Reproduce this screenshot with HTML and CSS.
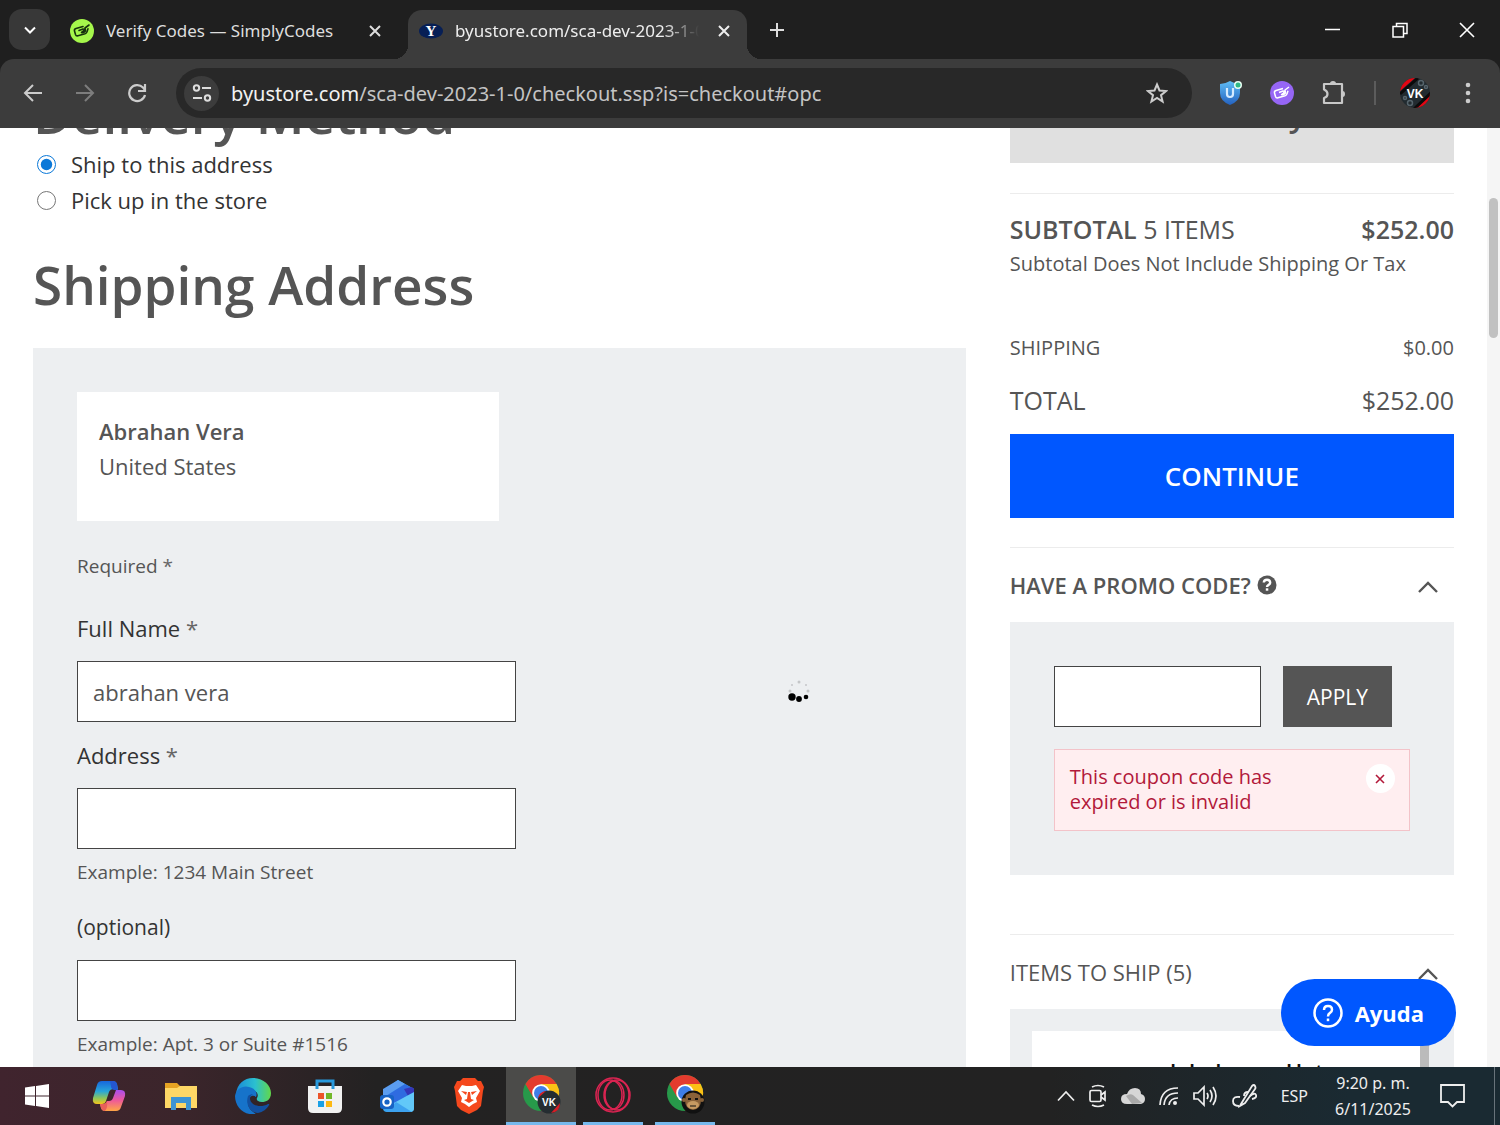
FILE: index.html
```html
<!DOCTYPE html>
<html lang="en">
<head>
    <meta charset="UTF-8">
    <meta name="viewport" content="width=device-width, initial-scale=1.0">
    <title>Checkout</title>
    <link rel="stylesheet" href="styles.css">
</head>
<body>
    <!-- Tab strip -->
    <header class="tab-strip">
        <button class="tab-search" aria-label="Search tabs">
            <svg width="14" height="14" viewBox="0 0 14 14" fill="none" stroke="#fff" stroke-width="2"><path d="M2 4.500l5 5 5-5"/></svg>
        </button>
        <div class="tab">
            <svg class="favicon" viewBox="0 0 24 24"><circle cx="12" cy="12" r="12" fill="#a5f74b"/><g fill="none" stroke="#17320d" stroke-width="1.600" stroke-linejoin="round" stroke-linecap="round"><path d="M13 7.500L6 9.500q-2 .7-1.500 2.500l1 3.500q.6 1.800 2.500 1.300l7-2q1.500-.5 2-2l1-3"/><path d="M9 11.500l4-1.500q2 0 .5 2l-2 1.500q2 1 4-1.500l-.5-3L19 6"/></g></svg>
            <span class="tab-title">Verify Codes — SimplyCodes</span>
            <button class="tab-close" aria-label="Close tab"><svg width="12" height="12" viewBox="0 0 12 12" stroke="#ddd" stroke-width="2"><path d="M1 1l10 10M11 1L1 11"/></svg></button>
        </div>
        <div class="tab tab-active">
            <svg class="favicon" viewBox="0 0 24 24"><ellipse cx="12" cy="12" rx="12" ry="7.500" fill="#071f55"/><text x="12" y="17" text-anchor="middle" class="favicon-letter">Y</text></svg>
            <span class="tab-title">byustore.com/sca-dev-2023-1-0</span>
            <button class="tab-close" aria-label="Close tab"><svg width="12" height="12" viewBox="0 0 12 12" stroke="#eee" stroke-width="2"><path d="M1 1l10 10M11 1L1 11"/></svg></button>
        </div>
        <button class="new-tab" aria-label="New tab"><svg width="16" height="16" viewBox="0 0 16 16" stroke="#ddd" stroke-width="2"><path d="M8 1v14M1 8h14"/></svg></button>
        <div class="window-controls">
            <button aria-label="Minimize"><svg width="16" height="16" viewBox="0 0 16 16" stroke="#fff" stroke-width="1.500"><path d="M0 7.500h15"/></svg></button>
            <button aria-label="Restore"><svg width="16" height="16" viewBox="0 0 16 16" fill="none" stroke="#fff" stroke-width="1.500"><path d="M1 4.500h10.500V15H1zM4.500 4.500V1.500H15v10h-3.500"/></svg></button>
            <button aria-label="Close"><svg width="16" height="16" viewBox="0 0 16 16" stroke="#fff" stroke-width="1.600"><path d="M1 1l14 14M15 1L1 15"/></svg></button>
        </div>
    </header>

    <!-- Toolbar -->
    <div class="toolbar-wrap">
    <nav class="toolbar">
        <button class="nav-btn" aria-label="Back"><svg width="20" height="20" viewBox="0 0 20 20" fill="none" stroke="#ccc" stroke-width="2"><path d="M19 10H2M10 2l-8 8 8 8"/></svg></button>
        <button class="nav-btn" aria-label="Forward"><svg width="20" height="20" viewBox="0 0 20 20" fill="none" stroke="#7d7d7d" stroke-width="2"><path d="M1 10h17M10 2l8 8-8 8"/></svg></button>
        <button class="nav-btn" aria-label="Reload"><svg width="20" height="20" viewBox="0 0 20 20" fill="none" stroke="#ccc" stroke-width="2.200"><path d="M18 12A8 8 0 1 1 16 4.500L18 7M18 1v7h-7"/></svg></button>
        <div class="url-bar">
            <button class="site-info" aria-label="Site information"><svg width="20" height="20" viewBox="0 0 20 20" fill="none" stroke="#ddd" stroke-width="2"><circle cx="4.500" cy="5" r="2.700"/><path d="M10 5h9M1 15h9"/><circle cx="15.500" cy="15" r="2.700"/></svg></button>
            <div class="url"><span class="url-host">byustore.com</span><span>/sca-dev-2023-1-0/checkout.ssp?is=checkout#opc</span></div>
            <button class="icon-btn" aria-label="Bookmark"><svg width="22" height="22" viewBox="0 0 22 22" fill="none" stroke="#ccc" stroke-width="2"><path d="M11 2.500l2.500 6 6.500.5-5 4.200 1.600 6.300L11 16l-5.600 3.500L7 13.200 2 9l6.500-.5z"/></svg></button>
        </div>
        <div class="extensions">
            <button class="icon-btn" aria-label="Shield"><svg width="24" height="26" viewBox="0 0 24 26"><defs><linearGradient id="shield" x2="0" y2="1"><stop stop-color="#5fbdf5"/><stop offset="1" stop-color="#2462c0"/></linearGradient></defs><path d="M2 4Q7 4 12 1q5 3 10 3v9q0 8-10 12Q2 21 2 13z" fill="url(#shield)"/><path d="M9 8v6q0 3 3 3t3-3V8" fill="none" stroke="#d5ebff" stroke-width="2.200"/><circle cx="20" cy="5" r="4" fill="#e9fff4"/><circle cx="20" cy="5" r="2.500" fill="#2fb886"/></svg></button>
            <button class="icon-btn" aria-label="SimplyCodes"><svg width="24" height="24" viewBox="0 0 24 24"><circle cx="12" cy="12" r="12" fill="#9666f5"/><g fill="none" stroke="#fff" stroke-width="1.500" stroke-linejoin="round"><path d="M13 7.500L6 9.500q-2 .7-1.500 2.500l1 3.500q.6 1.800 2.500 1.300l7-2q1.500-.5 2-2l1-3"/><path d="M9 11.500l4-1.500q2 0 .5 2l-2 1.500q2 1 4-1.500l-.5-3L19 6"/></g></svg></button>
            <button class="icon-btn" aria-label="Extensions"><svg width="24" height="26" viewBox="0 0 24 26" fill="none" stroke="#c8c8c8" stroke-width="2.200" stroke-linejoin="round"><path d="M3 4h17v19H2v-5q3.500-1 3.500-4T2 9.500V4z"/><path d="M8 3.500q0-2.500 3-2.500t3 2.500zM20.500 11q2.500 0 2.500 3t-2.500 3z" fill="#c8c8c8" stroke="none"/></svg></button>
            <span class="toolbar-sep"></span>
            <button class="icon-btn" aria-label="Profile"><svg width="30" height="30" viewBox="0 0 30 30"><defs><clipPath id="round"><circle cx="15" cy="15" r="15"/></clipPath></defs><g clip-path="url(#round)"><path fill="#222b30" d="M0 0h30v30H0z"/><path d="M0 13L15 0H0zM15 30l15-15v15z" fill="#e30613"/><path d="M0 16L18 0M14 31l19-18" stroke="#0b0b0b" stroke-width="3"/><g fill="none" stroke="#56646c" stroke-width="1.500"><circle cx="21" cy="5" r="2.500"/><circle cx="10" cy="25" r="2.500"/><circle cx="26" cy="9" r="1.500"/><circle cx="5" cy="20" r="1.500"/></g><text x="15" y="20" text-anchor="middle" class="avatar-text">VK</text></g></svg></button>
            <button class="icon-btn menu-btn" aria-label="Menu"><svg width="6" height="22" viewBox="0 0 6 22" fill="#ccc"><circle cx="3" cy="3" r="2.300"/><circle cx="3" cy="11" r="2.300"/><circle cx="3" cy="19" r="2.300"/></svg></button>
        </div>
    </nav>
    </div>

    <!-- Checkout page, scrolled a little -->
    <div class="viewport">
        <main class="checkout">
            <section class="checkout-form">
                <h2>Delivery Method</h2>
                <label class="radio-row"><input type="radio" name="delivery" checked> Ship to this address</label>
                <label class="radio-row"><input type="radio" name="delivery"> Pick up in the store</label>

                <h2 class="shipping-title">Shipping Address</h2>
                <form class="address-panel">
                    <div class="address-card">
                        <strong>Abrahan Vera</strong>
                        <span>United States</span>
                    </div>
                    <p class="required-note">Required <span class="star">*</span></p>
                    <div class="field">
                        <label for="fullname">Full Name <span class="star">*</span></label>
                        <input type="text" id="fullname" value="abrahan vera">
                    </div>
                    <div class="field">
                        <label for="addr1">Address <span class="star">*</span></label>
                        <input type="text" id="addr1">
                        <p class="hint">Example: 1234 Main Street</p>
                    </div>
                    <div class="field">
                        <label for="addr2" class="optional">(optional)</label>
                        <input type="text" id="addr2">
                        <p class="hint">Example: Apt. 3 or Suite #1516</p>
                    </div>
                </form>
            </section>

            <aside class="summary">
                <div class="summary-head">Summary</div>
                <div class="totals">
                    <div class="row row-big"><span><b>SUBTOTAL</b> 5 ITEMS</span><b>$252.00</b></div>
                    <p class="totals-note">Subtotal Does Not Include Shipping Or Tax</p>
                    <div class="row row-small"><span>SHIPPING</span><span>$0.00</span></div>
                    <div class="row row-big row-total"><span>TOTAL</span><span>$252.00</span></div>
                    <button class="continue-btn">CONTINUE</button>
                </div>
                <div class="accordion">
                    <button class="accordion-head">
                        <b>HAVE A PROMO CODE?</b>
                        <svg width="20" height="20" viewBox="0 0 20 20"><circle cx="10" cy="10" r="9.500" fill="#555"/><path d="M6.800 7.500Q7 4.800 10 4.800t3.200 2.700q0 1.500-1.600 2.400T10 12" fill="none" stroke="#fff" stroke-width="2.400"/><path fill="#fff" d="M8.800 13.300h2.500v2.400H8.800z"/></svg>
                        <svg class="chevron" width="20" height="16" viewBox="0 0 20 16" fill="none" stroke="#555" stroke-width="2.400"><path d="M1 15l9-9 9 9"/></svg>
                    </button>
                    <div class="promo-panel">
                        <div class="promo-form">
                            <input type="text" aria-label="Promo code">
                            <button class="apply-btn">APPLY</button>
                        </div>
                        <div class="alert">
                            <p>This coupon code has expired or is invalid</p>
                            <button class="alert-close" aria-label="Dismiss"><svg width="10" height="10" viewBox="0 0 10 10" stroke="#b2193a" stroke-width="1.600"><path d="M1 1l8 8M9 1L1 9"/></svg></button>
                        </div>
                    </div>
                </div>
                <div class="accordion accordion-items">
                    <button class="accordion-head">
                        <span>ITEMS TO SHIP (5)</span>
                        <svg class="chevron" width="20" height="16" viewBox="0 0 20 16" fill="none" stroke="#555" stroke-width="2.400"><path d="M1 15l9-9 9 9"/></svg>
                    </button>
                    <div class="items-panel">
                        <div class="item">modeled wear Hat</div>
                        <div class="items-thumb"></div>
                    </div>
                </div>
            </aside>
        </main>
        <div class="scrollbar"><div class="scrollbar-thumb"></div></div>

        <svg class="spinner" width="24" height="24" viewBox="0 0 24 24"><g fill="#c4c6c8"><circle cx="12" cy="3" r="1.500"/><circle cx="5" cy="6" r="1"/><circle cx="19" cy="6" r="1"/><circle cx="3" cy="12" r="1.500"/><circle cx="21" cy="12" r="1.500"/></g><circle cx="5" cy="18" r="3.700"/><circle cx="12" cy="20" r="2.900"/><circle cx="19" cy="18" r="2.300"/></svg>
        <button class="help-btn">
            <svg width="30" height="30" viewBox="0 0 30 30" fill="none" stroke="#fff" stroke-width="2.500"><circle cx="15" cy="15" r="13.500"/><path d="M11 12q0-4 4-4t4 3.700q0 2-2 3.200T15 18.500"/><path d="M15 20.500v2.700"/></svg>
            Ayuda
        </button>
    </div>

    <!-- Windows taskbar -->
    <footer class="taskbar">
        <div class="apps">
            <button class="app" aria-label="Start"><svg width="24" height="24" viewBox="0 0 24 24" fill="#fff"><path d="M0 3.500l10-1.400v9.400H0zM11 2l13-2v11.500H11zM0 12.500h10v9.400L0 20.500zM11 12.500h13V24l-13-2z"/></svg></button>
            <button class="app" aria-label="Copilot"><svg width="34" height="32" viewBox="0 0 34 32"><defs><linearGradient id="cop1" x2="0" y2="1"><stop stop-color="#1766dd"/><stop offset=".45" stop-color="#28a6d8"/><stop offset=".75" stop-color="#8fc65a"/><stop offset="1" stop-color="#f4c51c"/></linearGradient><linearGradient id="cop2" x2="0" y2="1"><stop stop-color="#a94df0"/><stop offset=".5" stop-color="#ee5a98"/><stop offset="1" stop-color="#ffa545"/></linearGradient></defs><path d="M10 1h11q3 0 4 3l1 5h-4q-4 0-5 3l-3 9q-1 3-4 3H5q-5 0-4-6L5 5q1-4 5-4z" fill="url(#cop1)"/><path d="M24 31H13q-3 0-4-3l-1-4h3q3 0 4-3h2q3 0 4-3l3-8h5q5 0 4 6l-4 11q-1 4-5 4z" fill="url(#cop2)"/><path d="M18 1h3q3 0 4 3l1 6h-4q-3-1-3-4z" fill="#2457cf"/><path d="M8 24h3q3 0 4-3 1 7-2 10-3 0-4-3z" fill="#e8605a"/></svg></button>
            <button class="app" aria-label="File Explorer"><svg width="32" height="28" viewBox="0 0 32 28"><path d="M0 1h12l3 3h17v22H0z" fill="#e5a323"/><path d="M0 6h12l3-2h17v22H0z" fill="#fdd766"/><path d="M6 28V15h20v13h-5v-7h-10v7z" fill="#3c94d4"/></svg></button>
            <button class="app" aria-label="Edge"><svg width="36" height="36" viewBox="0 0 36 36"><defs><linearGradient id="edge"><stop stop-color="#1a8ad8"/><stop offset=".55" stop-color="#2bc0d0"/><stop offset="1" stop-color="#62d84a"/></linearGradient></defs><path d="M1 16C2 6 9 0 18 0c10 0 18 7 18 15 0 7-5 9-9 9-4 0-6-2-5-4 2-3 0-8-6-8-8 0-12 5-15 9z" fill="url(#edge)"/><path d="M0 18c1-7 8-11 14-9 6 1 9 6 7 10-3-3-9 0-8 6 0 4 3 8 8 11C9 38 0 29 0 18z" fill="#1673ca"/><path d="M13 18c-3 9 3 17 10 17 5-1 9-4 11-8 1-1 0-1-1-1-7 4-17 2-18-5 0-2 1-4 3-5-2 0-4 1-5 2z" fill="#1250a0"/></svg></button>
            <button class="app" aria-label="Store"><svg width="34" height="34" viewBox="0 0 34 34"><path d="M9 9V2h16v7" fill="none" stroke="#2999dc" stroke-width="3"/><path d="M0 7h34v22q0 5-5 5H5q-5 0-5-5z" fill="#f1f1f1"/><path d="M9 7v3M25 7v3" stroke="#2999dc" stroke-width="3"/><path fill="#ec5429" d="M10 14h6v6h-6z"/><path fill="#72b728" d="M18 14h6v6h-6z"/><path fill="#1ba0e6" d="M10 22h6v6h-6z"/><path fill="#fdb913" d="M18 22h6v6h-6z"/></svg></button>
            <button class="app" aria-label="Outlook"><svg width="34" height="34" viewBox="0 0 34 34"><path d="M3 12L18 1l16 9v19q0 4-4 4H7q-4 0-4-4z" fill="#36a3f0"/><path d="M3 10L18 1l7 4L6 17l-3-1z" fill="#5b9df0"/><path d="M6 17L25 5l9 5v3L14 25z" fill="#2f6be0"/><path d="M24 10l8-2 2 2v6l-6 1z" fill="#3436b8"/><path d="M12 25l22-12v16q0 4-4 4H12z" fill="#62c8f8"/><path d="M6 33l10-10 16 10z" fill="#3da2ef"/><rect y="16" width="14" height="14" rx="3" fill="#1763c5"/><circle cx="7" cy="23" r="3.700" fill="none" stroke="#fff" stroke-width="2.200"/></svg></button>
            <button class="app" aria-label="Brave"><svg width="30" height="36" viewBox="0 0 30 36"><path d="M9 0h12l3 3h3l3 6-1 4-2 15-4 4-8 4-8-4-4-4L1 13 0 9l3-6h3z" fill="#f5481d"/><path d="M8 7l4 1h6l4-1 4 6-4 7 1 4-4 2-4 3-4-3-4-2 1-4-4-7z" fill="#fff"/><path d="M7 13l6 1-1 3zM23 13l-6 1 1 3zM14 14h2l1 7 3 1-5 3-5-3 3-1z" fill="#f5481d"/></svg></button>
            <button class="app app-open app-current" aria-label="Chrome"><svg width="40" height="40" viewBox="-2 0 40 40"><circle cx="18" cy="18" r="18" fill="#27994a"/><path d="M2.400 9A18 18 0 0 1 33.600 9H18l-8 13z" fill="#e33b2e"/><path d="M33.600 9A18 18 0 0 1 18 36l8-14-8-13z" fill="#fbc116"/><circle cx="18" cy="18" r="8.800" fill="#fff"/><circle cx="18" cy="18" r="7" fill="#3f7ee8"/><circle cx="26" cy="27" r="11.500" fill="#252d31"/><path d="M15 23l8-7q-7 1-8 7zM28 38l9-10q0 9-9 10z" fill="#d81d25"/><text x="26" y="31" text-anchor="middle" class="badge-text">VK</text></svg></button>
            <button class="app app-open" aria-label="Opera"><svg width="36" height="36" viewBox="0 0 36 36" fill="none" stroke="#dc2452" stroke-width="1.500"><circle cx="18" cy="18" r="17"/><ellipse cx="15" cy="18" rx="12" ry="15"/><ellipse cx="19" cy="18" rx="10" ry="14"/><ellipse cx="22" cy="18" rx="12" ry="15"/></svg></button>
            <button class="app app-open" aria-label="Chrome, second profile"><svg width="40" height="40" viewBox="-2 0 40 40"><circle cx="18" cy="18" r="18" fill="#27994a"/><path d="M2.400 9A18 18 0 0 1 33.600 9H18l-8 13z" fill="#e33b2e"/><path d="M33.600 9A18 18 0 0 1 18 36l8-14-8-13z" fill="#fbc116"/><circle cx="18" cy="18" r="8.800" fill="#fff"/><circle cx="18" cy="18" r="7" fill="#3f7ee8"/><circle cx="26" cy="27" r="11.500" fill="#111"/><path d="M19 20q7-5 14 0l1 5q0 9-8 10-8-1-8-10z" fill="#8a6239"/><circle cx="17" cy="25" r="2" fill="#8a6239"/><circle cx="35" cy="25" r="2" fill="#8a6239"/><ellipse cx="26" cy="30" rx="6" ry="4" fill="#c69a62"/><path d="M21 24h3M28 24h3" stroke="#111" stroke-width="2"/><path d="M23 31h6" stroke="#111"/></svg></button>
        </div>
        <div class="tray">
            <svg width="18" height="12" viewBox="0 0 18 12" fill="none" stroke="#eee" stroke-width="1.700"><path d="M1 10.500L9 2l8 8.500"/></svg>
            <svg width="18" height="24" viewBox="0 0 18 24" fill="none" stroke="#eee" stroke-width="1.700"><rect x="1" y="6.500" width="11" height="11" rx="1.500"/><path d="M12 11l4-3v8l-4-3M3 3q6-3 12 0M3 21q6 3 12 0"/></svg>
            <svg width="24" height="18" viewBox="0 0 24 18"><path d="M6 17q-6 0-6-5t6-5q2-6 8-6t6 6q4 1 4 5t-4 5z" fill="#d6d6d6"/><path d="M11 17l-6-8q4-3 7-1l9 8z" fill="#a9a9a9"/></svg>
            <svg width="20" height="20" viewBox="0 0 20 20" fill="none" stroke="#eee" stroke-width="1.700"><path d="M1 19Q2 2 19 2M5 19Q6 7 19 7M10 19q1-7 9-7"/><circle cx="16" cy="17" r="2" fill="#eee" stroke="none"/></svg>
            <svg width="25" height="22" viewBox="0 0 25 22" fill="none" stroke="#eee" stroke-width="1.700"><path d="M1 8h4l6-6v18l-6-6H1zM14 8q2 3 0 6M17 5q4 6 0 12M20 2q6 9 0 18"/></svg>
            <svg width="25" height="26" viewBox="0 0 25 26" fill="none" stroke="#eee" stroke-width="1.800"><path d="M9 21L20 3q2-2 3 0t0 3L13 20l-5 3z"/><path d="M8 14q-7-1-7 4t6 5M16 9q-4 0-4 4M18 13q5-4 6-1t-4 4"/></svg>
            <span class="lang">ESP</span>
            <time class="clock">9:20 p. m.<br>6/11/2025</time>
            <svg class="notif" width="25" height="24" viewBox="0 0 25 24" fill="none" stroke="#eee" stroke-width="1.800"><path d="M1 1h23v17h-7l-4.500 4.500L8 18H1z"/></svg>
        </div>
    </footer>
</body>
</html>
```
FILE: styles.css
```css
* {
    box-sizing: border-box;
}
body {
    display: flex;
    flex-direction: column;
    height: 100vh;
    margin: 0;
    overflow: hidden;
    font-family: "Open Sans", sans-serif;
    font-size: 22px;
    color: #555;
    background-color: #fff;
}
button {
    display: flex;
    align-items: center;
    justify-content: center;
    padding: 0;
    border: none;
    background: none;
    font: inherit;
    color: inherit;
}
p {
    margin: 0;
}
b, strong {
    font-weight: 600;
}
svg {
    flex: none;
}

/* Tab strip */
.tab-strip {
    display: flex;
    align-items: flex-end;
    height: 59px;
    padding-left: 9px;
    background-color: #1f1f1f;
    color: #ddd;
    font-family: "Noto Sans", sans-serif;
    font-size: 17px;
}
.tab-search {
    width: 41px;
    height: 41px;
    margin-bottom: 9px;
    border-radius: 13px;
    background-color: #383838;
}
.tab {
    display: flex;
    align-items: center;
    width: 346px;
    height: 49px;
    padding: 0 14px 8px 20px;
}
.tab-active {
    position: relative;
    width: 339px;
    margin-left: 12px;
    padding: 0 16px 8px 11px;
    border-radius: 14px 14px 0 0;
    background-color: #3c3c3c;
    color: #eee;
}
.tab-active::before,
.tab-active::after {
    content: "";
    position: absolute;
    bottom: 0;
    width: 14px;
    height: 14px;
}
.tab-active::before {
    right: 100%;
    background: radial-gradient(circle at 0 0, transparent 14px, #3c3c3c 14px);
}
.tab-active::after {
    left: 100%;
    background: radial-gradient(circle at 100% 0, transparent 14px, #3c3c3c 14px);
}
.favicon {
    width: 24px;
    height: 24px;
    margin-right: 12px;
}
.favicon-letter {
    font: bold 15px "Liberation Serif", serif;
    fill: #fff;
}
.tab-title {
    flex: 1;
    overflow: hidden;
    white-space: nowrap;
}
.tab-active .tab-title {
    -webkit-mask-image: linear-gradient(to right, #000 86%, transparent);
    mask-image: linear-gradient(to right, #000 86%, transparent);
}
.tab-close {
    width: 14px;
    height: 24px;
    margin-left: 18px;
}
.new-tab {
    width: 40px;
    height: 40px;
    margin: 0 0 9px 10px;
}
.window-controls {
    display: flex;
    margin-left: auto;
}
.window-controls button {
    width: 67px;
    height: 59px;
}

/* Toolbar */
.toolbar-wrap {
    background-color: #1f1f1f;
}
.toolbar {
    display: flex;
    align-items: center;
    height: 69px;
    padding: 0 29px 1px 7px;
    border-radius: 14px 14px 0 0;
    background-color: #3c3c3c;
}
.nav-btn {
    width: 52px;
    height: 40px;
}
.url-bar {
    display: flex;
    flex: 1;
    align-items: center;
    height: 50px;
    margin-left: 13px;
    padding: 0 24px 0 8px;
    border-radius: 25px;
    background-color: #282828;
    font-family: "Noto Sans", sans-serif;
    font-size: 20px;
    color: #c4c4c4;
}
.site-info {
    width: 35px;
    height: 35px;
    border-radius: 50%;
    background-color: #3c3c3c;
}
.url {
    display: flex;
    flex: 1;
    margin-left: 12px;
}
.url-host {
    color: #f2f2f2;
}
.extensions {
    display: flex;
    align-items: center;
    gap: 28px;
    margin-left: 26px;
}
.toolbar-sep {
    width: 2px;
    height: 24px;
    margin-right: -4px;
    background-color: #5c5c5c;
}
.menu-btn {
    margin-left: 7px;
}
.avatar-text {
    font: bold 12px "Liberation Sans", sans-serif;
    fill: #fff;
}

/* Page area */
.viewport {
    position: relative;
    display: flex;
    flex: 1;
    min-height: 0;
    overflow: hidden;
}
.checkout {
    display: grid;
    flex: 1;
    grid-template-columns: 21fr 10fr;
    gap: 44px;
    height: max-content;
    margin-top: -44px;
    padding: 0 33px;
}
h2 {
    margin: 0 0 2px;
    font-size: 53px;
    font-weight: 600;
    line-height: 60px;
}
.shipping-title {
    margin: 37px 0 33px;
}
.radio-row {
    display: flex;
    align-items: center;
    gap: 15px;
    line-height: 36px;
    color: #333;
}
.radio-row input {
    width: 19px;
    height: 19px;
    margin: 0 0 0 4px;
    accent-color: #0a78d8;
}
.address-panel {
    padding: 44px;
    background-color: #edeff1;
}
.address-card {
    display: flex;
    flex-direction: column;
    width: 50%;
    min-height: 129px;
    padding: 22px;
    background-color: #fff;
    line-height: 35px;
}
.required-note {
    margin: 30px 0 32px;
    font-size: 19px;
    line-height: 30px;
}
.field {
    width: 52%;
    margin-bottom: 18px;
}
.field label {
    display: block;
    margin-bottom: 18px;
    line-height: 30px;
    color: #333;
}
.field .optional {
    font-size: 21px;
}
.star {
    color: #666;
}
input[type="text"] {
    display: block;
    width: 100%;
    height: 61px;
    padding: 0 15px;
    border: 1px solid #444;
    background-color: #fff;
    font: inherit;
    color: #555;
}
.hint {
    margin: 8px 0 25px;
    font-size: 19px;
    line-height: 30px;
}

/* Order summary */
.summary-head {
    padding: 15px 0 34px;
    background-color: #e0e0e0;
    font-size: 32px;
    font-weight: 600;
    line-height: 30px;
    text-align: center;
}
.totals {
    margin-top: 30px;
    padding-top: 17px;
    border-top: 1px solid #ececec;
}
.row {
    display: flex;
    justify-content: space-between;
}
.row-big {
    font-size: 25px;
    line-height: 36px;
}
.row-small {
    margin: 52px 0 19px;
    font-size: 20px;
    line-height: 30px;
}
.row-total {
    margin-bottom: 16px;
}
.totals-note {
    font-size: 20px;
    line-height: 34px;
}
.continue-btn {
    width: 100%;
    height: 84px;
    background-color: #0057ff;
    color: #fff;
    font-size: 26px;
    font-weight: 600;
}
.accordion {
    margin-top: 29px;
    border-top: 1px solid #ececec;
}
.accordion-items {
    margin-top: 59px;
}
.accordion-head {
    justify-content: flex-start;
    gap: 6px;
    width: 100%;
    height: 74px;
    padding-right: 16px;
}
.chevron {
    margin-left: auto;
}
.promo-panel {
    padding: 44px;
    background-color: #edeff1;
}
.promo-form {
    display: flex;
    gap: 22px;
    margin-bottom: 22px;
    padding-right: 18px;
}
.promo-form input[type="text"] {
    flex: 1;
    min-width: 0;
}
.apply-btn {
    padding: 0 24px;
    background-color: #555;
    color: #fff;
    font-size: 21px;
}
.alert {
    display: flex;
    align-items: flex-start;
    justify-content: space-between;
    padding: 14px 14px 16px 15px;
    border: 1px solid #f3c3c9;
    background-color: #ffeef0;
    color: #b2193a;
    font-size: 20px;
    line-height: 25px;
}
.alert p {
    width: 230px;
}
.alert-close {
    width: 29px;
    height: 29px;
    border-radius: 50%;
    background-color: #fff;
}
.items-panel {
    display: flex;
    height: 120px;
    padding: 22px 25px 0 22px;
    background-color: #edeff1;
}
.item {
    flex: 1;
    padding-top: 25px;
    background-color: #fff;
    color: #111;
    font-weight: 600;
    text-align: center;
}
.items-thumb {
    width: 9px;
    background-color: #bbb;
}
.scrollbar {
    width: 13px;
    padding: 70px 2px 0;
    background-color: #f5f5f5;
}
.scrollbar-thumb {
    height: 140px;
    border-radius: 5px;
    background-color: #c1c1c1;
}
.spinner {
    position: absolute;
    top: 551px;
    left: 787px;
}
.help-btn {
    position: absolute;
    right: 44px;
    bottom: 21px;
    gap: 12px;
    height: 67px;
    padding: 0 32px;
    border-radius: 34px;
    background-color: #0057ff;
    color: #fff;
    font-weight: 700;
}

/* Taskbar */
.taskbar {
    display: flex;
    justify-content: space-between;
    height: 58px;
    background: linear-gradient(to right, #40242e 0%, #3b252b 12%, #232222 25%, #222 70%, #1a2a32 90%);
    color: #eee;
    font-family: "Noto Sans", sans-serif;
    font-size: 16px;
}
.apps {
    display: flex;
    padding-left: 1px;
}
.app {
    width: 72px;
    height: 58px;
}
.app-open {
    width: 60px;
    margin: 0 6px;
    border-bottom: 3px solid #76b9ed;
}
.app-current {
    width: 70px;
    margin: 0 1px;
    background-color: #4b4b49;
}
.badge-text {
    font: bold 10px "Liberation Sans", sans-serif;
    fill: #fff;
}
.tray {
    display: flex;
    align-items: center;
    gap: 14px;
    margin-right: 5px;
    padding-right: 29px;
    border-right: 1px solid #68737a;
}
.lang {
    margin: 0 13px 0 10px;
}
.clock {
    line-height: 26px;
    text-align: center;
}
.notif {
    margin-left: 15px;
}
```
